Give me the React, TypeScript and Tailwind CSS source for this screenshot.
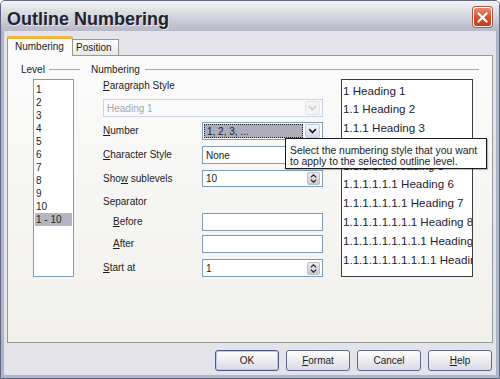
import React from 'react';

const levels = ['1', '2', '3', '4', '5', '6', '7', '8', '9', '10', '1 - 10'];

const preview = Array.from({ length: 10 }, (_, i) => `${Array(i + 1).fill('1').join('.')} Heading ${i + 1}`);

const Chevron = ({ disabled }: { disabled?: boolean }) => (
  <svg width="9" height="6" viewBox="0 0 9 6">
    <path d="M1.2 1.2 L4.5 4.5 L7.8 1.2" fill="none" stroke={disabled ? '#c9ccd4' : '#1e2230'} strokeWidth="1.7" />
  </svg>
);

const DropButton = ({ disabled }: { disabled?: boolean }) => (
  <div
    className={
      disabled
        ? 'w-[15px] h-[14px] rounded-[2px] border border-[#e2e5ea] bg-[#f3f4f6] flex items-center justify-center'
        : 'w-[15px] h-[14px] rounded-[2px] border border-[#c1cbdd] bg-gradient-to-b from-[#f5f7fc] to-[#d3d9e7] flex items-center justify-center'
    }
  >
    <Chevron disabled={disabled} />
  </div>
);

const SpinButton = () => (
  <div className="w-[13px] h-[13px] rounded-[2px] border border-[#b9bcc6] bg-gradient-to-b from-[#ededf0] to-[#c9cad2] flex flex-col items-center justify-center gap-[1px]">
    <svg width="7" height="4" viewBox="0 0 7 4">
      <path d="M0.8 3.4 L3.5 0.8 L6.2 3.4" fill="none" stroke="#2a2d38" strokeWidth="1.3" />
    </svg>
    <svg width="7" height="4" viewBox="0 0 7 4">
      <path d="M0.8 0.6 L3.5 3.2 L6.2 0.6" fill="none" stroke="#2a2d38" strokeWidth="1.3" />
    </svg>
  </div>
);

const Label = ({ pre, u, post, indent }: { pre?: string; u: string; post?: string; indent?: boolean }) => (
  <div className={indent ? 'w-[99px] pl-[10px] leading-[14px]' : 'w-[99px] leading-[14px]'}>
    {pre}
    <span className="underline underline-offset-[1px]">{u}</span>
    {post}
  </div>
);

const Field = ({ value, spin, h = 'h-[18px]' }: { value: string; spin?: boolean; h?: string }) => (
  <div className={`w-[121px] ${h} border border-[#7f9db9] bg-white flex items-center pl-[3px] pr-[2px]`}>
    <span className="flex-1">{value}</span>
    {spin && <SpinButton />}
  </div>
);

const Button = ({ children, primary }: { children: React.ReactNode; primary?: boolean }) => (
  <div
    className={
      primary
        ? 'w-[64px] h-[21px] rounded-[3px] border border-[#4b5b84] bg-gradient-to-b from-[#ffffff] to-[#d9dae4] shadow-[inset_0_0_0_1px_#b9cbed] flex items-center justify-center'
        : 'w-[64px] h-[21px] rounded-[3px] border border-[#5d6a8c] bg-gradient-to-b from-[#ffffff] to-[#d9dae4] flex items-center justify-center'
    }
  >
    {children}
  </div>
);

export default function App() {
  return (
    <div className="relative w-[500px] h-[379px] border border-[#5f6682] rounded-t-[5px] bg-[#b0b4c8] flex flex-col overflow-hidden font-['Liberation_Sans',Arial,sans-serif] text-[10px] text-[#1c1c22]">
      {/* title bar */}
      <div className="h-[30px] shrink-0 bg-gradient-to-b from-[#f3f3f7] via-[#d5d5de] to-[#b7b7c6] flex items-start justify-between pl-[6px] pr-[7px]">
        <div className="pt-[8px] leading-[20px] text-[18px] font-bold text-[#22222e] [text-shadow:1px_1px_0_#e8e8ee]">
          Outline Numbering
        </div>
        <div className="mt-[6px] w-[19px] h-[20px] rounded-[3px] border border-white bg-gradient-to-b from-[#eb8a6e] via-[#d7532f] to-[#c23a1a] shadow-[0_0_0_1px_#a85a48] flex items-center justify-center">
          <svg width="11" height="11" viewBox="0 0 11 11">
            <path d="M1.5 1.5 L9.5 9.5 M9.5 1.5 L1.5 9.5" stroke="white" strokeWidth="2.2" strokeLinecap="round" />
          </svg>
        </div>
      </div>

      {/* body */}
      <div className="flex-1 mx-[3px] mb-[3px] bg-[#e3e3e9] flex flex-col pl-[3px] pr-[3px] pt-[5px]">
        {/* tabs */}
        <div className="flex items-end h-[19px]">
          <div className="relative z-10 -mb-px w-[66px] h-[20px] border-x border-[#919b9c] border-t-[3px] border-t-[#f2b640] rounded-t-[2px] bg-[#fbfbfb] pl-[7px] leading-[15px]">
            Numbering
          </div>
          <div className="w-[46px] h-[16px] border-t border-r border-[#919b9c] bg-gradient-to-b from-[#ffffff] to-[#e8e8e6] pl-[3px] leading-[16px]">
            Position
          </div>
        </div>

        {/* panel */}
        <div className="h-[288px] border border-[#919b9c] bg-gradient-to-b from-[#fbfbfb] to-[#f1f0eb] flex pl-[13px] pt-[6px]">
          {/* level column */}
          <div className="w-[59px] flex flex-col">
            <div className="h-[14px] flex items-center">
              <span>Level</span>
              <div className="flex-1 ml-[4px] h-px bg-[#a9aab0]" />
            </div>
            <div className="mt-[3px] ml-[12px] w-[41px] h-[198px] border border-[#7f9db9] bg-white pt-[3px] px-px">
              {levels.map((l, i) => (
                <div key={i} className={i === 10 ? 'h-[13px] leading-[13px] pl-px bg-[#b6b6c2]' : 'h-[13px] leading-[13px] pl-px'}>
                  {l}
                </div>
              ))}
            </div>
          </div>

          {/* numbering column */}
          <div className="ml-[11px] w-[388px] flex flex-col">
            <div className="h-[14px] flex items-center">
              <span>Numbering</span>
              <div className="flex-1 ml-[5px] h-px bg-[#a9aab0]" />
            </div>
            <div className="mt-[3px] pl-[12px] flex">
              <div className="w-[220px] flex flex-col">
                <Label u="P" post="aragraph Style" />
                <div className="mt-[6px] w-[220px] h-[18px] border border-[#cad4e2] bg-[#fafafa] flex items-center pl-[3px] pr-[2px] text-[#a6a6aa]">
                  <span className="flex-1">Heading 1</span>
                  <DropButton disabled />
                </div>

                <div className="mt-[5px] flex items-center">
                  <Label u="N" post="umber" />
                  <div className="w-[121px] h-[18px] border border-[#7f9db9] bg-white flex items-center p-px pr-[2px]">
                    <div className="flex-1 h-full bg-[#adadbc] border border-dotted border-[#202020] pl-[2px] leading-[14px]">1, 2, 3, ...</div>
                    <div className="ml-[2px]">
                      <DropButton />
                    </div>
                  </div>
                </div>

                <div className="mt-[6px] flex items-center">
                  <Label u="C" post="haracter Style" />
                  <div className="w-[121px] h-[18px] border border-[#7f9db9] bg-white flex items-center pl-[3px] pr-[2px]">
                    <span className="flex-1">None</span>
                    <DropButton />
                  </div>
                </div>

                <div className="mt-[6px] flex items-center">
                  <Label pre="Sho" u="w" post=" sublevels" />
                  <Field value="10" spin h="h-[17px]" />
                </div>

                <div className="mt-[8px] h-[14px] leading-[14px]">Separator</div>

                <div className="mt-[4px] flex items-center">
                  <Label u="B" post="efore" indent />
                  <Field value="" />
                </div>

                <div className="mt-[4px] flex items-center">
                  <Label u="A" post="fter" indent />
                  <Field value="" />
                </div>

                <div className="mt-[6px] flex items-center">
                  <Label u="S" post="tart at" />
                  <Field value="1" spin />
                </div>
              </div>

              <div className="ml-[18px] w-[132px] h-[198px] border border-[#3c3c44] bg-white overflow-hidden pt-[1.5px] pl-[1px] text-[11.6px] text-[#222230]">
                {preview.map((p, i) => (
                  <div key={i} className="h-[18.8px] leading-[18.8px] whitespace-nowrap">
                    {p}
                  </div>
                ))}
              </div>
            </div>
          </div>
        </div>

        {/* buttons */}
        <div className="mt-[7px] flex justify-end gap-[7px] pr-[1px]">
          <Button primary>OK</Button>
          <Button>
            <span className="underline underline-offset-[1px]">F</span>ormat
          </Button>
          <Button>Cancel</Button>
          <Button>
            <span className="underline underline-offset-[1px]">H</span>elp
          </Button>
        </div>
      </div>

      {/* tooltip */}
      <div className="absolute left-[284px] top-[137px] w-[202px] h-[31px] border border-[#1a1a1a] bg-[#fdfdfd] shadow-[1px_1px_1px_rgba(0,0,0,0.25)] pl-[4px] pt-[6px] text-[10.4px] leading-[11px]">
        <div>Select the numbering style that you want</div>
        <div>to apply to the selected outline level.</div>
      </div>
    </div>
  );
}
